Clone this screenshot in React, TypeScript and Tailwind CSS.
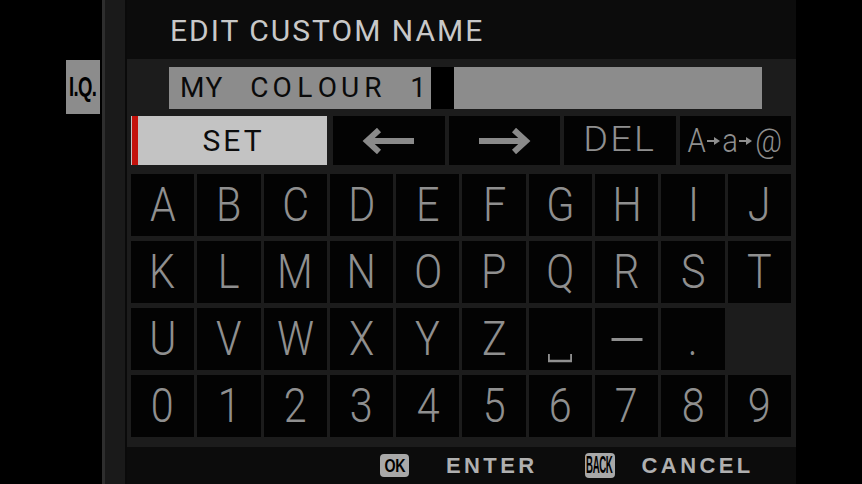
import React from 'react'

const rows: string[][] = [
  ['A', 'B', 'C', 'D', 'E', 'F', 'G', 'H', 'I', 'J'],
  ['K', 'L', 'M', 'N', 'O', 'P', 'Q', 'R', 'S', 'T'],
  ['U', 'V', 'W', 'X', 'Y', 'Z', 'space', 'dash', '.', ''],
  ['0', '1', '2', '3', '4', '5', '6', '7', '8', '9'],
]

const name = 'MY COLOUR 1'

function BigArrow({ dir }: { dir: 'left' | 'right' }) {
  return (
    <svg width="54" height="26" viewBox="0 0 54 26" className={dir === 'right' ? 'rotate-180' : ''}>
      <path d="M6 13 H52" stroke="#8a8a8a" strokeWidth="6" fill="none" />
      <path d="M17 2 L5 13 L17 24" stroke="#8a8a8a" strokeWidth="6" fill="none" strokeLinejoin="miter" />
    </svg>
  )
}

function SmallArrow() {
  return (
    <svg width="14" height="10" viewBox="0 0 14 10">
      <path d="M0 5 H8" stroke="#8f8f8f" strokeWidth="2" />
      <path d="M7 1 L13 5 L7 9 Z" fill="#8f8f8f" />
    </svg>
  )
}

function Key({ k }: { k: string }) {
  if (k === '') return <div className="h-[62px]" />
  let content: React.ReactNode = k
  if (k === 'space') {
    content = (
      <svg width="28" height="10" viewBox="0 0 28 10" className="mt-[38px]">
        <path d="M1 1 V8 H27 V1" stroke="#8f8f8f" strokeWidth="2.4" fill="none" />
      </svg>
    )
  } else if (k === 'dash') {
    content = <div className="h-[3px] w-[36px] bg-[#8f8f8f]" />
  }
  return (
    <div className="flex h-[62px] items-center justify-center bg-[#030303] font-['Roboto',sans-serif] text-[48px] font-light text-[#8f8f8f]">
      <span className="inline-block scale-x-[0.86] leading-none">{content}</span>
    </div>
  )
}

export default function App() {
  return (
    <div className="flex h-[484px] w-[862px] overflow-hidden bg-black">
      {/* side tab */}
      <div className="w-[102px] shrink-0">
        <div className="ml-[66px] mt-[60px] flex h-[54px] w-[34px] items-center justify-center bg-[#8c8c8c]">
          <span className="inline-block scale-x-[0.66] font-['Liberation_Sans',sans-serif] text-[28px] font-bold leading-none tracking-[-1px] text-black">
            I.Q.
          </span>
        </div>
      </div>
      <div className="w-[3px] shrink-0 bg-[#2e2e2e]" />
      <div className="w-[20px] shrink-0 bg-[#1a1a1a]" />
      <div className="w-[2px] shrink-0 bg-[#0a0a0a]" />

      {/* main panel */}
      <div className="flex w-[669px] shrink-0 flex-col">
        <div className="flex h-[59px] items-center bg-[#0c0c0c] pl-[43px] pt-[1px]">
          <span className="font-['Roboto',sans-serif] text-[30px] tracking-[2px] text-[#c8c8c8]">EDIT CUSTOM NAME</span>
        </div>

        <div className="flex flex-1 flex-col bg-[#1c1c1c]">
          {/* name input */}
          <div className="ml-[42px] mt-[8px] flex h-[42px]">
            <div className="flex w-[262px] items-center bg-[#8c8c8c] pl-[11px]">
              {name.split('').map((c, i) => (
                <span
                  key={i}
                  className="inline-block w-[22.7px] text-center font-['Roboto',sans-serif] text-[28px] leading-none text-[#0a0a0a]"
                >
                  {c === ' ' ? '\u00a0' : c}
                </span>
              ))}
            </div>
            <div className="w-[23px] bg-black" />
            <div className="w-[308px] bg-[#8c8c8c]" />
          </div>

          {/* action row */}
          <div className="ml-[4px] mt-[7px] flex h-[49px] w-[660px]">
            <div className="flex w-[196px] bg-[#c3c3c3]">
              <div className="ml-[1px] w-[6px] bg-[#c4120c]" />
              <div className="flex flex-1 items-center justify-center pl-[2px] font-['Roboto',sans-serif] text-[30px] tracking-[3px] text-[#0c0c0c]">
                SET
              </div>
            </div>
            <div className="ml-[6px] flex flex-1 gap-[4px]">
              <div className="flex flex-1 items-center justify-center bg-[#030303]">
                <BigArrow dir="left" />
              </div>
              <div className="flex flex-1 items-center justify-center bg-[#030303]">
                <BigArrow dir="right" />
              </div>
              <div className="flex flex-1 items-center justify-center bg-[#030303] font-['Roboto',sans-serif] text-[35px] font-light tracking-[2px] text-[#8f8f8f]">
                <span className="inline-block scale-x-[1.08]">DEL</span>
              </div>
              <div className="flex flex-1 items-center justify-center bg-[#030303] font-['Roboto',sans-serif] text-[34px] font-light text-[#8f8f8f]">
                <span className="inline-block scale-x-[0.86]">A</span>
                <SmallArrow />
                <span className="inline-block scale-x-[0.86]">a</span>
                <SmallArrow />
                <span className="inline-block scale-x-[0.86]">@</span>
              </div>
            </div>
          </div>

          {/* keyboard */}
          <div className="ml-[4px] mt-[9px] grid w-[660px] grid-cols-10 gap-x-[3px] gap-y-[5px]">
            {rows.flat().map((k, i) => (
              <Key key={i} k={k} />
            ))}
          </div>
        </div>

        {/* footer */}
        <div className="flex h-[37px] items-center bg-[#0c0c0c] font-['Liberation_Sans',sans-serif] text-[22px] font-bold tracking-[3.4px] text-[#b0b0b0]">
          <div className="ml-[253px] flex h-[23px] w-[29px] items-center justify-center rounded-[4px] bg-[#a8a8a8]">
            <span className="inline-block scale-x-[0.75] text-[19px] font-bold leading-none tracking-[-0.5px] text-black">OK</span>
          </div>
          <span className="ml-[37px]">ENTER</span>
          <div className="ml-[47px] flex h-[25px] w-[30px] items-center justify-center rounded-[4px] bg-[#a8a8a8]">
            <span className="inline-block scale-x-[0.42] text-[23px] font-bold leading-none tracking-[-1px] text-black">BACK</span>
          </div>
          <span className="ml-[27px]">CANCEL</span>
        </div>
      </div>
    </div>
  )
}
